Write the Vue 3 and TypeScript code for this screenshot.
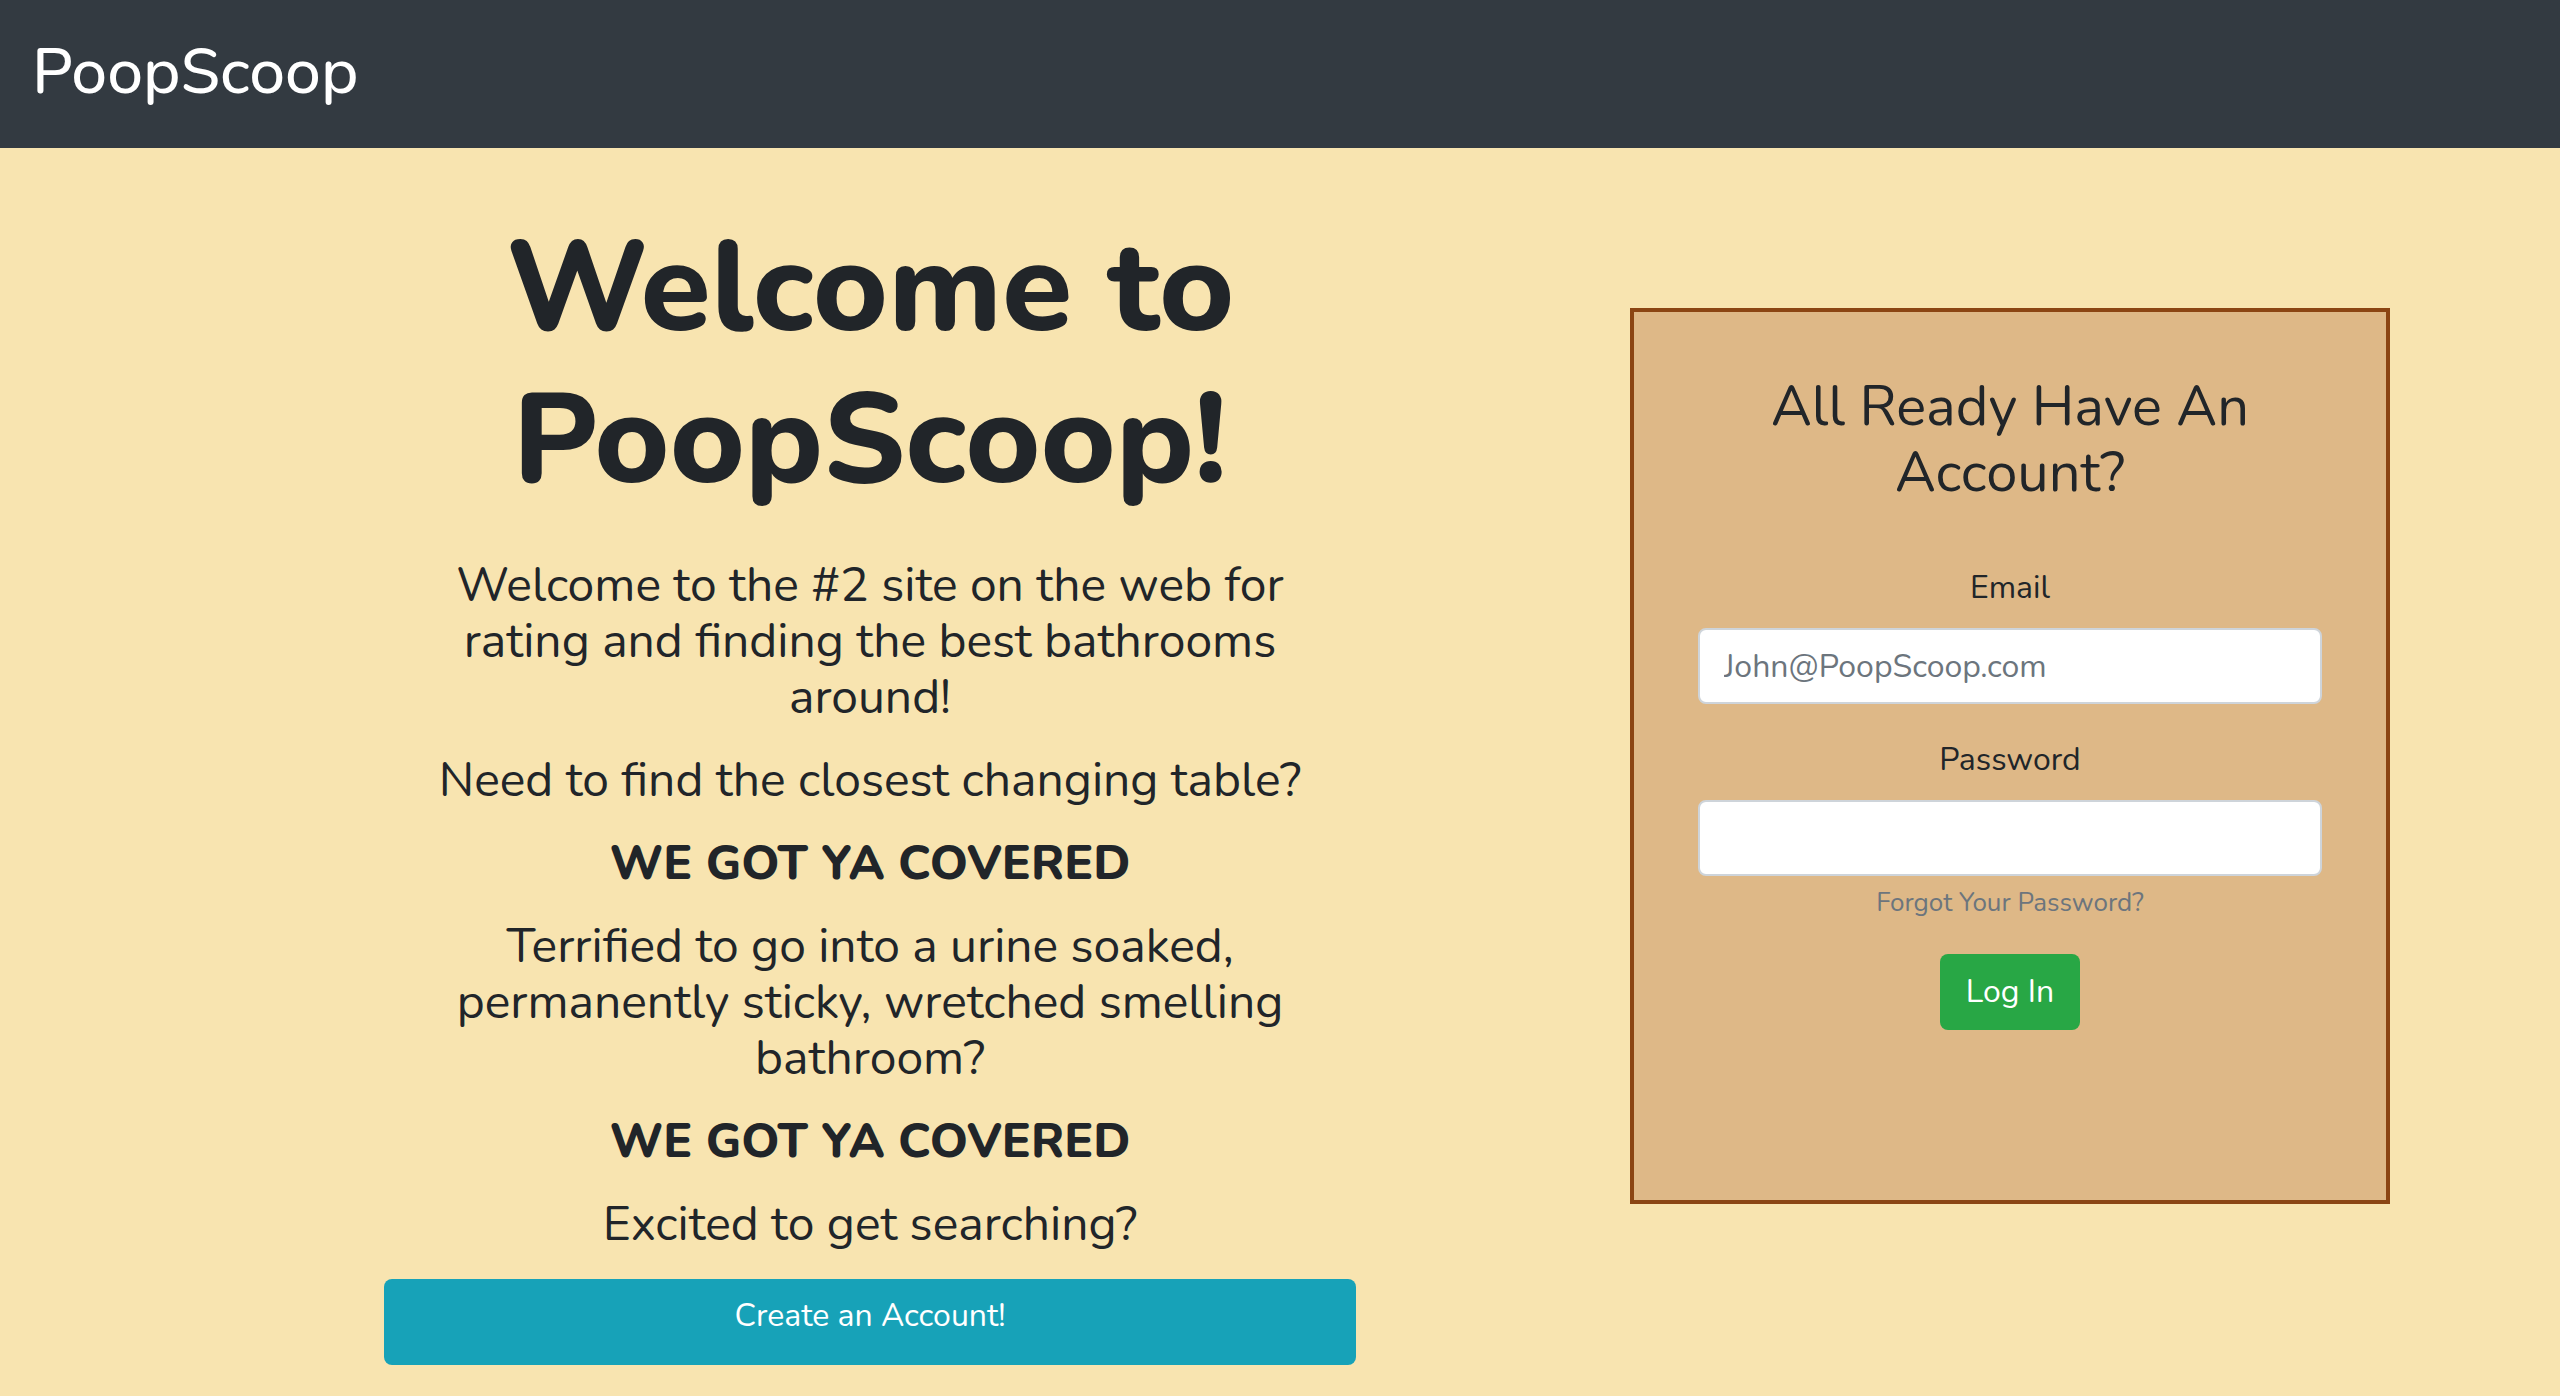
<script setup lang="ts">
import { ref } from 'vue'

const email = ref('')
const password = ref('')

const pitch = [
  { text: 'Welcome to the #2 site on the web for rating and finding the best bathrooms around!', strong: false },
  { text: 'Need to find the closest changing table?', strong: false },
  { text: 'WE GOT YA COVERED', strong: true },
  { text: 'Terrified to go into a urine soaked, permanently sticky, wretched smelling bathroom?', strong: false },
  { text: 'WE GOT YA COVERED', strong: true },
  { text: 'Excited to get searching?', strong: false },
]
</script>

<template>
  <div class="page">
    <header class="navbar">
      <a class="brand" href="#">PoopScoop</a>
    </header>
    <main class="content">
      <section class="intro">
        <h1>Welcome to PoopScoop!</h1>
        <p v-for="(line, i) in pitch" :key="i" :class="{ strong: line.strong }">{{ line.text }}</p>
        <button class="create" type="button">Create an Account!</button>
      </section>
      <section class="login">
        <h2>All Ready Have An Account?</h2>
        <form @submit.prevent>
          <div class="field">
            <label for="email">Email</label>
            <input id="email" v-model="email" type="email" placeholder="John@PoopScoop.com" />
          </div>
          <div class="field">
            <label for="password">Password</label>
            <input id="password" v-model="password" type="password" />
            <a class="forgot" href="#">Forgot Your Password?</a>
          </div>
          <button class="submit" type="submit">Log In</button>
        </form>
      </section>
    </main>
  </div>
</template>

<style>
body {
  background: #f8e4b0;
}
</style>

<style scoped>
.page,
.page * {
  box-sizing: border-box;
}
.page {
  min-height: 100vh;
  background: #f8e4b0;
  color: #212529;
  font-family: Nunito, Lato, sans-serif;
  font-size: 32px;
  line-height: 48px;
}
.navbar {
  padding: 24px 32px 28px;
  background: #333a41;
}
.brand {
  display: block;
  width: fit-content;
  color: #fff;
  font-size: 64px;
  font-weight: 500;
  line-height: 96px;
  text-decoration: none;
}
.content {
  display: grid;
  grid-template-columns: 384fr 972fr 274fr 760fr 170fr;
  align-items: start;
  padding: 64px 0 32px;
}
.intro {
  grid-column: 2;
  display: flex;
  flex-direction: column;
  align-items: center;
  text-align: center;
}
h1 {
  max-width: 800px;
  margin: 0 0 41px;
  font-size: 128px;
  font-weight: 800;
  line-height: 152px;
}
.intro p {
  max-width: 876px;
  margin: 0 0 27px;
  font-size: 48px;
  line-height: 56px;
}
.intro p.strong {
  font-weight: 800;
}
.create {
  align-self: stretch;
  height: 86px;
  padding: 0 24px 12px;
  border: 0;
  border-radius: 8px;
  background: #17a2b8;
  color: #fff;
  font: inherit;
}
.login {
  grid-column: 4;
  margin-top: 96px;
  min-height: 896px;
  padding: 62px 64px;
  border: 4px solid #8b4513;
  background: #deb887;
  text-align: center;
}
h2 {
  margin: 0 0 58px;
  font-size: 56px;
  font-weight: 400;
  line-height: 66px;
}
.field {
  display: flex;
  flex-direction: column;
  align-items: center;
  margin-bottom: 32px;
}
label {
  margin-bottom: 16px;
}
input {
  width: 100%;
  height: 76px;
  padding: 12px 24px;
  border: 2px solid #ced4da;
  border-radius: 8px;
  background: #fff;
  color: #495057;
  font: inherit;
}
input::placeholder {
  color: #6c757d;
  opacity: 1;
}
.forgot {
  margin-top: 8px;
  color: #6c757d;
  font-size: 26px;
  line-height: 38px;
  text-decoration: none;
}
.submit {
  height: 76px;
  padding: 0 26px;
  border: 0;
  border-radius: 8px;
  background: #28a745;
  color: #fff;
  font: inherit;
}
</style>
